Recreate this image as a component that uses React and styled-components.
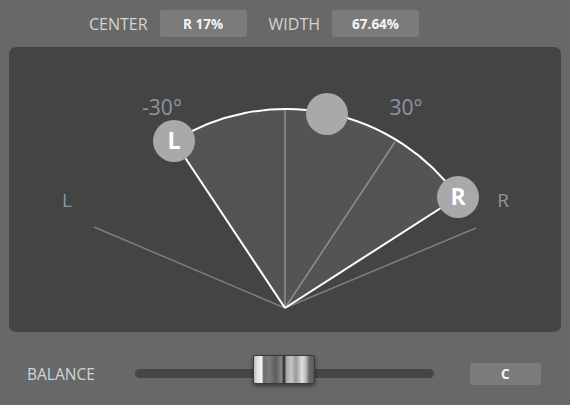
import React from "react";
import styled, { createGlobalStyle } from "styled-components";

const GlobalStyle = createGlobalStyle`
  html, body {
    margin: 0;
    padding: 0;
    background: #686868;
    font-family: "Open Sans", "Liberation Sans", sans-serif;
  }
`;

const Root = styled.div`
  width: 570px;
  height: 405px;
  background: #686868;
  display: flex;
  flex-direction: column;
  overflow: hidden;
`;

const TopBar = styled.div`
  height: 47px;
  display: flex;
  align-items: center;
  padding-left: 89px;
  box-sizing: border-box;
`;

const Label = styled.span`
  font-size: ${(p) => p.$size || 16}px;
  color: #d2d4d6;
  margin-left: ${(p) => p.$gap || 0}px;
`;

const ValueBox = styled.div`
  width: ${(p) => p.$w}px;
  height: ${(p) => p.$h}px;
  margin-left: ${(p) => p.$gap}px;
  background: #7b7b7b;
  border-radius: 3px;
  color: #f4f4f4;
  font-weight: 700;
  font-size: 13.5px;
  display: flex;
  align-items: center;
  justify-content: center;
`;

const Panel = styled.div`
  margin: 0 9px;
  height: 285px;
  background: #444444;
  border-radius: 7px;
  overflow: hidden;
`;

const BottomRow = styled.div`
  flex: 1;
  display: flex;
  align-items: center;
  padding: 10px 0 0 27px;
  box-sizing: border-box;
`;

const Track = styled.div`
  position: relative;
  width: 299px;
  height: 9px;
  margin-left: 40px;
  background: #464646;
  border-radius: 5px;
`;

const Thumb = styled.div`
  position: absolute;
  left: 118px;
  top: -14px;
  width: 60px;
  height: 27px;
  border: 1px solid #3a3a3a;
  border-radius: 2px;
  box-shadow: 0 2px 4px rgba(0, 0, 0, 0.45);
  background: linear-gradient(
    to right,
    #bcbcbc 0%,
    #e2e2e2 6%,
    #f2f2f2 13%,
    #6e6e6e 16%,
    #7a7a7a 26%,
    #5c5c5c 36%,
    #858585 46%,
    #3a3a3a 49%,
    #3a3a3a 51%,
    #a6a6a6 54%,
    #c6c6c6 62%,
    #9a9a9a 70%,
    #e0e0e0 80%,
    #bdbdbd 86%,
    #6a6a6a 92%,
    #5a5a5a 100%
  );
`;

const O = { x: 285, y: 308 };
const handles = [
  { x: 174, y: 141, text: "L" },
  { x: 327, y: 114, text: "" },
  { x: 458, y: 197, text: "R" },
];

const Diagram = () => (
  <svg width="552" height="285" viewBox="9 47 552 285">
    <path
      d={`M ${O.x} ${O.y} L 174 141 A 212 212 0 0 1 458 197 Z`}
      fill="#545454"
    />
    <g stroke="#7c7e84" strokeWidth="1.5">
      <line x1={O.x} y1={O.y} x2="94" y2="227" />
      <line x1={O.x} y1={O.y} x2="476" y2="228" />
    </g>
    <g stroke="#8e8e92" strokeWidth="1.5">
      <line x1={O.x} y1={O.y} x2="285" y2="109" />
      <line x1={O.x} y1={O.y} x2="395" y2="142" />
    </g>
    <g stroke="#ffffff" strokeWidth="2" fill="none">
      <line x1={O.x} y1={O.y} x2="174" y2="141" />
      <line x1={O.x} y1={O.y} x2="458" y2="197" />
      <path d="M 174 141 A 212 212 0 0 1 458 197" />
    </g>
    <g fill="#8d96a1" fontFamily="Open Sans, Liberation Sans, sans-serif">
      <text x="162" y="115" fontSize="21" textAnchor="middle">-30°</text>
      <text x="406" y="115" fontSize="21" textAnchor="middle">30°</text>
      <text x="67" y="207" fontSize="19" textAnchor="middle">L</text>
      <text x="503" y="207" fontSize="19" textAnchor="middle">R</text>
    </g>
    {handles.map((h, i) => (
      <g key={i}>
        <circle cx={h.x} cy={h.y} r="21" fill="#a9a9a9" />
        {h.text && (
          <text
            x={h.x}
            y={h.y + 8}
            fontSize="23"
            fontWeight="700"
            fill="#ffffff"
            textAnchor="middle"
            fontFamily="Open Sans, Liberation Sans, sans-serif"
          >
            {h.text}
          </text>
        )}
      </g>
    ))}
  </svg>
);

const App = () => (
  <Root>
    <GlobalStyle />
    <TopBar>
      <Label>CENTER</Label>
      <ValueBox $w={87} $h={27} $gap={12}>R 17%</ValueBox>
      <Label $gap={22}>WIDTH</Label>
      <ValueBox $w={87} $h={27} $gap={12}>67.64%</ValueBox>
    </TopBar>
    <Panel>
      <Diagram />
    </Panel>
    <BottomRow>
      <Label $size={15.5}>BALANCE</Label>
      <Track>
        <Thumb />
      </Track>
      <ValueBox $w={71} $h={22} $gap={36}>C</ValueBox>
    </BottomRow>
  </Root>
);

export default App;
